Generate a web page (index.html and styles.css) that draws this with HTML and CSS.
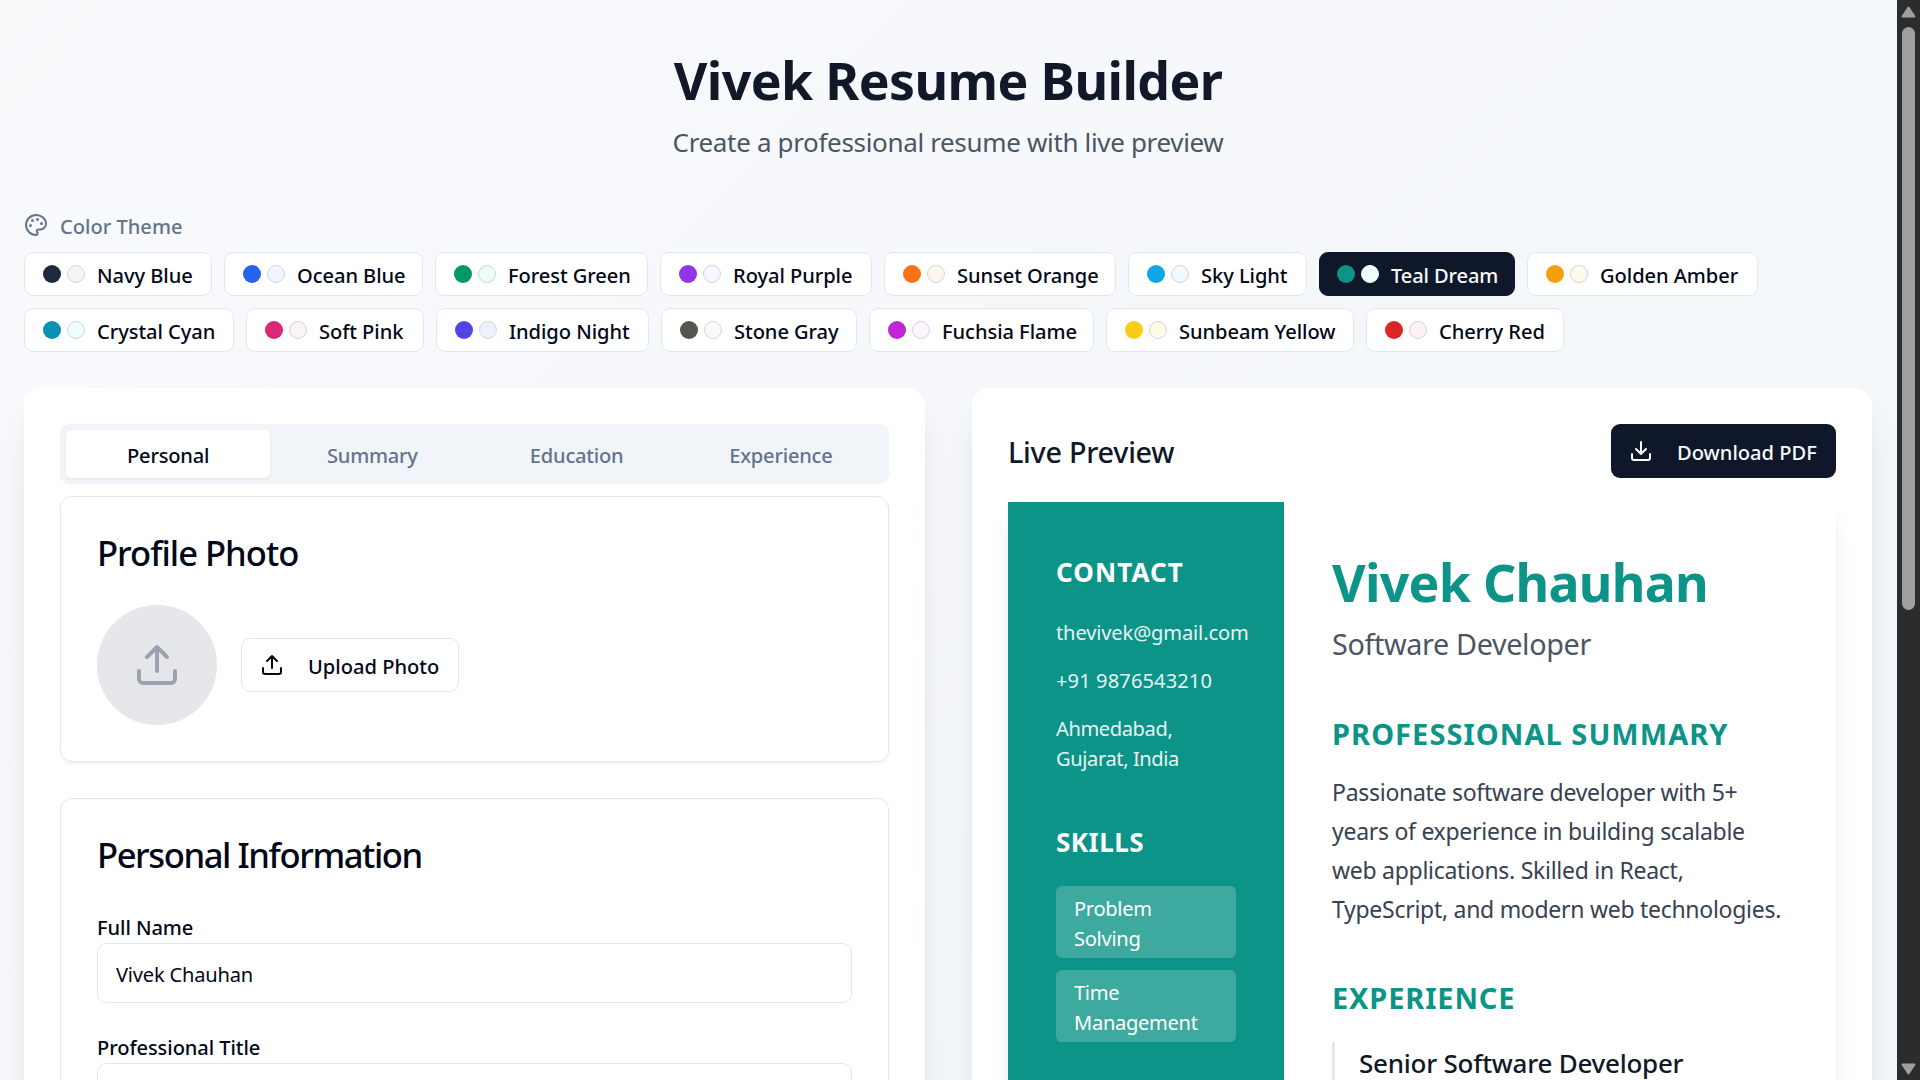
FILE: index.html
```html
<!DOCTYPE html>
<html lang="en">
<head>
<meta charset="utf-8">
<title>Vivek Resume Builder</title>
<link rel="stylesheet" href="styles.css">
</head>
<body>
<div class="window">
  <div class="page">
    <header class="hero">
      <h1 class="hero-title">Vivek Resume Builder</h1>
      <p class="hero-sub">Create a professional resume with live preview</p>
    </header>

    <section class="themes">
      <div class="themes-label">
        <svg class="icon" viewBox="0 0 24 24"><circle class="dot" cx="13.5" cy="6.5" r=".5"/><circle class="dot" cx="17.5" cy="10.5" r=".5"/><circle class="dot" cx="8.5" cy="7.5" r=".5"/><circle class="dot" cx="6.5" cy="12.5" r=".5"/><path d="M12 2C6.5 2 2 6.5 2 12s4.5 10 10 10c.926 0 1.648-.746 1.648-1.688 0-.437-.18-.835-.437-1.125-.29-.289-.438-.652-.438-1.125a1.64 1.64 0 0 1 1.668-1.668h1.996c3.051 0 5.555-2.503 5.555-5.554C21.965 6.012 17.461 2 12 2z"/></svg>
        <span>Color Theme</span>
      </div>
      <div class="chip-row">
        <button class="chip navy"><i class="swatch"></i><i class="swatch tint"></i><span>Navy Blue</span></button>
        <button class="chip ocean"><i class="swatch"></i><i class="swatch tint"></i><span>Ocean Blue</span></button>
        <button class="chip forest"><i class="swatch"></i><i class="swatch tint"></i><span>Forest Green</span></button>
        <button class="chip royal"><i class="swatch"></i><i class="swatch tint"></i><span>Royal Purple</span></button>
        <button class="chip sunset"><i class="swatch"></i><i class="swatch tint"></i><span>Sunset Orange</span></button>
        <button class="chip sky"><i class="swatch"></i><i class="swatch tint"></i><span>Sky Light</span></button>
        <button class="chip teal active"><i class="swatch"></i><i class="swatch tint"></i><span>Teal Dream</span></button>
        <button class="chip amber"><i class="swatch"></i><i class="swatch tint"></i><span>Golden Amber</span></button>
      </div>
      <div class="chip-row">
        <button class="chip cyan"><i class="swatch"></i><i class="swatch tint"></i><span>Crystal Cyan</span></button>
        <button class="chip pink"><i class="swatch"></i><i class="swatch tint"></i><span>Soft Pink</span></button>
        <button class="chip indigo"><i class="swatch"></i><i class="swatch tint"></i><span>Indigo Night</span></button>
        <button class="chip stone"><i class="swatch"></i><i class="swatch tint"></i><span>Stone Gray</span></button>
        <button class="chip fuchsia"><i class="swatch"></i><i class="swatch tint"></i><span>Fuchsia Flame</span></button>
        <button class="chip sunbeam"><i class="swatch"></i><i class="swatch tint"></i><span>Sunbeam Yellow</span></button>
        <button class="chip cherry"><i class="swatch"></i><i class="swatch tint"></i><span>Cherry Red</span></button>
      </div>
    </section>

    <main class="columns">
      <section class="panel">
        <nav class="tabs">
          <button class="tab active">Personal</button>
          <button class="tab">Summary</button>
          <button class="tab">Education</button>
          <button class="tab">Experience</button>
        </nav>
        <div class="card">
          <h2 class="card-title photo-title">Profile Photo</h2>
          <div class="photo-row">
            <div class="avatar">
              <svg class="icon icon-lg" viewBox="0 0 24 24"><path d="M21 15v4a2 2 0 0 1-2 2H5a2 2 0 0 1-2-2v-4M17 8l-5-5-5 5M12 3v12"/></svg>
            </div>
            <button class="btn btn-outline">
              <svg class="icon" viewBox="0 0 24 24"><path d="M21 15v4a2 2 0 0 1-2 2H5a2 2 0 0 1-2-2v-4M17 8l-5-5-5 5M12 3v12"/></svg>
              <span>Upload Photo</span>
            </button>
          </div>
        </div>
        <div class="card card-info">
          <h2 class="card-title info-title">Personal Information</h2>
          <label class="field"><span class="field-label">Full Name</span><input class="field-input" type="text" value="Vivek Chauhan"></label>
          <label class="field"><span class="field-label">Professional Title</span><input class="field-input" type="text"></label>
        </div>
      </section>

      <section class="panel">
        <div class="preview-head">
          <h2 class="preview-title">Live Preview</h2>
          <button class="btn btn-dark">
            <svg class="icon" viewBox="0 0 24 24"><path d="M21 15v4a2 2 0 0 1-2 2H5a2 2 0 0 1-2-2v-4M7 10l5 5 5-5M12 15V3"/></svg>
            <span>Download PDF</span>
          </button>
        </div>
        <article class="resume">
          <aside class="side">
            <h3 class="side-title">CONTACT</h3>
            <div class="contact">
              <p class="email">thevivek@gmail.com</p>
              <p class="phone">+91 9876543210</p>
              <p class="place">Ahmedabad, Gujarat, India</p>
            </div>
            <h3 class="side-title skills-title">SKILLS</h3>
            <ul class="skills">
              <li>Problem Solving</li>
              <li>Time Management</li>
            </ul>
          </aside>
          <div class="body">
            <h1 class="name">Vivek Chauhan</h1>
            <p class="role">Software Developer</p>
            <h2 class="section-title">PROFESSIONAL SUMMARY</h2>
            <p class="summary">Passionate software developer with 5+ years of experience in building scalable web applications. Skilled in React, TypeScript, and modern web technologies.</p>
            <h2 class="section-title experience-title">EXPERIENCE</h2>
            <div class="job"><h3 class="job-title">Senior Software Developer</h3></div>
          </div>
        </article>
      </section>
    </main>
  </div>
  <div class="scrollbar">
    <svg class="arrow" viewBox="0 0 15 12"><path d="M7.5 1.5 13.5 10.5H1.5z"/></svg>
    <div class="thumb"></div>
    <svg class="arrow arrow-down" viewBox="0 0 15 12"><path d="M7.5 10.5 13.5 1.5H1.5z"/></svg>
  </div>
</div>
</body>
</html>
```
FILE: styles.css
```css
* { box-sizing: border-box; margin: 0; padding: 0; }
html, body { height: 1080px; overflow: hidden; }
body { font-family: "Noto Sans", "Open Sans", sans-serif; font-size: 20.1px; color: #020817; }
button, input { font: inherit; color: inherit; }
h1, h2, h3 { font-weight: 500; }

.window { display: flex; width: 1920px; height: 1080px; overflow: hidden; }
.page {
  flex: 1; height: 1920px; padding: 50px 25px 0 24px;
  background: linear-gradient(to bottom right, #f8fafc, #f1f5f9);
}

.icon {
  width: 24px; height: 24px; flex: none; fill: none; stroke: currentColor;
  stroke-width: 2; stroke-linecap: round; stroke-linejoin: round;
}
.icon .dot { fill: currentColor; }
.icon-lg { width: 48px; height: 48px; }

.hero { text-align: center; }
.hero-title { font-size: 51.8px; line-height: 60px; font-weight: 700; letter-spacing: -.6px; color: #111827; }
.hero-sub { margin-top: 11px; font-size: 26px; line-height: 42px; letter-spacing: -.34px; color: #4b5563; }

.themes { display: flex; flex-direction: column; gap: 12px; margin-top: 47px; }
.themes-label { display: flex; align-items: center; gap: 12px; height: 30px; font-weight: 500; color: #64748b; }
.themes-label span { padding-top: 2px; }
.chip-row { display: flex; gap: 12px; }
.chip {
  display: flex; align-items: center; gap: 6px; height: 44px; padding: 0 0 0 18px;
  border: 1px solid #e2e8f0; border-radius: 9px; background: #fff;
  font-weight: 500; letter-spacing: -.06px; white-space: nowrap;
}
.chip span { padding: 2px 0 0 6px; }
.chip.active { padding-left: 17px; background: #0f172a; border-color: #0f172a; color: #f8fafc; letter-spacing: -.12px; }
.swatch { width: 18px; height: 18px; flex: none; border-radius: 50%; background: var(--main); }
.swatch.tint { background: var(--tint); border: 1px solid #d1d5db; }
.active .swatch.tint { border-color: var(--tint); }
.navy { width: 188px; --main: #1e293b; --tint: #f3f4f6; }
.ocean { width: 199px; --main: #2563eb; --tint: #eff6ff; }
.forest { width: 213px; --main: #059669; --tint: #ecfdf5; }
.royal { width: 212px; --main: #9333ea; --tint: #faf5ff; }
.sunset { width: 232px; --main: #f97316; --tint: #fff7ed; }
.sky { width: 179px; --main: #0ea5e9; --tint: #f0f9ff; }
.teal { width: 196px; --main: #0d9488; --tint: #f0fdfa; }
.amber { width: 231px; --main: #f59e0b; --tint: #fffbeb; }
.cyan { width: 210px; --main: #0891b2; --tint: #ecfeff; }
.pink { width: 178px; --main: #db2777; --tint: #fdf2f8; }
.indigo { width: 213px; --main: #4f46e5; --tint: #eef2ff; }
.stone { width: 196px; --main: #57534e; --tint: #fafaf9; }
.fuchsia { width: 225px; --main: #c026d3; --tint: #fdf4ff; }
.sunbeam { width: 248px; --main: #facc15; --tint: #fefce8; }
.cherry { width: 198px; --main: #dc2626; --tint: #fef2f2; }

.columns { display: grid; grid-template-columns: 901px 900px; gap: 47px; margin-top: 36px; }
.panel {
  height: 1500px; padding: 36px; border-radius: 18px; background: #fff;
  box-shadow: 0 30px 37.5px -7.5px rgba(0, 0, 0, .1), 0 12px 15px -9px rgba(0, 0, 0, .1);
}

.tabs { display: grid; grid-template-columns: repeat(4, 1fr); height: 60px; padding: 6px; border-radius: 9px; background: #f1f5f9; }
.tab { padding-top: 2px; border: 0; border-radius: 6px; background: none; font-weight: 500; letter-spacing: -.22px; color: #64748b; }
.tab.active { background: #fff; color: #020817; box-shadow: 0 1.5px 3px rgba(0, 0, 0, .05); }

.card { margin-top: 12px; padding: 38px 36px 36px; border: 1px solid #e2e8f0; border-radius: 12px; box-shadow: 0 1.5px 3px rgba(0, 0, 0, .05); }
.card-info { height: 900px; margin-top: 36px; }
.card-title { font-size: 34.6px; line-height: 36px; }
.photo-title { letter-spacing: -1px; }
.info-title { letter-spacing: -1.42px; }
.photo-row { display: flex; align-items: center; gap: 24px; margin-top: 34px; }
.avatar { display: grid; place-items: center; width: 120px; height: 120px; border-radius: 50%; background: #e5e7eb; color: #9ca3af; }
.btn { display: flex; align-items: center; gap: 24px; height: 54px; padding: 0 18px; border-radius: 9px; font-weight: 500; white-space: nowrap; }
.btn span { padding-top: 2px; }
.btn-outline { width: 218px; border: 1px solid #e2e8f0; background: #fff; }
.btn-dark { width: 225px; border: 0; background: #0f172a; color: #f8fafc; }
.field { display: block; margin-top: 30px; }
.info-title + .field { margin-top: 40px; }
.field-label { display: block; line-height: 30px; font-weight: 500; letter-spacing: -.08px; }
.field-input { display: block; width: 100%; height: 60px; padding: 2px 18px 0; border: 1px solid #e2e8f0; border-radius: 9px; background: #fff; letter-spacing: -.2px; }

.preview-head { display: flex; align-items: center; justify-content: space-between; }
.preview-title { padding-top: 1px; font-size: 28.8px; letter-spacing: -.28px; color: #111827; }
.resume { display: grid; grid-template-columns: 276px 552px; height: 1350px; margin-top: 24px; background: #fff; box-shadow: 0 15px 22.5px -4.5px rgba(0, 0, 0, .1), 0 6px 9px -6px rgba(0, 0, 0, .1); }
.side { padding: 52px 48px 0; background: #0d9488; color: #fff; }
.side-title { font-size: 26px; line-height: 36px; font-weight: 700; letter-spacing: 1.1px; }
.contact { display: flex; flex-direction: column; gap: 18px; margin-top: 28px; line-height: 30px; opacity: .9; }
.email { letter-spacing: -.14px; }
.phone { letter-spacing: .1px; }
.place { letter-spacing: -.4px; }
.skills-title { margin-top: 50px; letter-spacing: .5px; }
.skills { display: flex; flex-direction: column; gap: 12px; margin-top: 26px; list-style: none; }
.skills li { padding: 8px 18px 4px; border-radius: 6px; background: rgba(255, 255, 255, .2); line-height: 30px; letter-spacing: -.3px; }

.body { padding: 50px 48px 0; }
.name { font-size: 51.8px; line-height: 60px; font-weight: 700; letter-spacing: -.71px; color: #0d9488; }
.role { margin-top: 14px; font-size: 28.8px; line-height: 36px; letter-spacing: -.37px; color: #4b5563; }
.section-title { margin-top: 54px; font-size: 29px; line-height: 36px; font-weight: 700; letter-spacing: 1.05px; color: #0d9488; }
.summary { margin-top: 21px; font-size: 23px; line-height: 39px; letter-spacing: -.28px; color: #374151; }
.experience-title { margin-top: 51px; letter-spacing: .85px; }
.job { height: 300px; margin-top: 26px; padding: 3px 0 0 24px; border-left: 3px solid #e5e7eb; }
.job-title { font-size: 26px; line-height: 36px; letter-spacing: -.25px; color: #111827; }

.scrollbar { display: flex; flex-direction: column; align-items: center; width: 23px; height: 1080px; padding: 6px 0 5px; background: #2c2c2c; }
.arrow { width: 15px; height: 12px; fill: #9f9f9f; stroke: #9f9f9f; stroke-width: 2; stroke-linejoin: round; }
.arrow-down { margin-top: auto; }
.thumb { width: 13px; height: 583px; margin-top: 9px; border-radius: 7px; background: #9f9f9f; }
```
